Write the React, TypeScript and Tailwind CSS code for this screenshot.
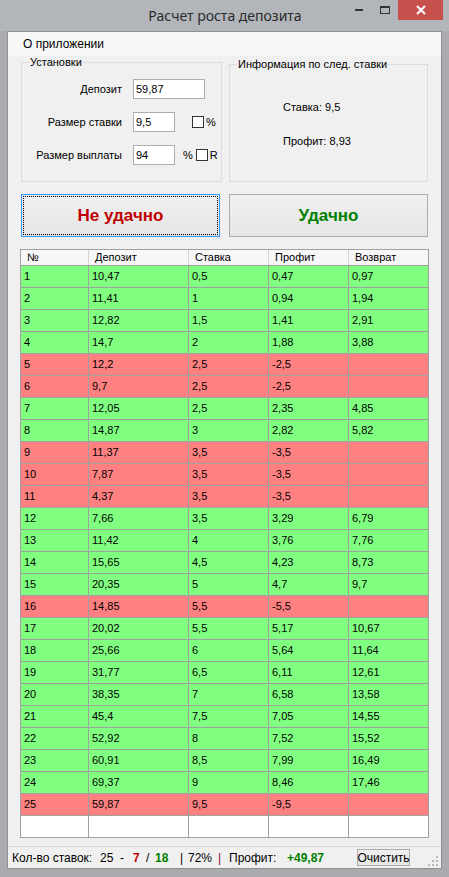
import React from 'react';

type Row = [number, string, string, string, string, boolean];

const rows: Row[] = [
  [1, '10,47', '0,5', '0,47', '0,97', true],
  [2, '11,41', '1', '0,94', '1,94', true],
  [3, '12,82', '1,5', '1,41', '2,91', true],
  [4, '14,7', '2', '1,88', '3,88', true],
  [5, '12,2', '2,5', '-2,5', '', false],
  [6, '9,7', '2,5', '-2,5', '', false],
  [7, '12,05', '2,5', '2,35', '4,85', true],
  [8, '14,87', '3', '2,82', '5,82', true],
  [9, '11,37', '3,5', '-3,5', '', false],
  [10, '7,87', '3,5', '-3,5', '', false],
  [11, '4,37', '3,5', '-3,5', '', false],
  [12, '7,66', '3,5', '3,29', '6,79', true],
  [13, '11,42', '4', '3,76', '7,76', true],
  [14, '15,65', '4,5', '4,23', '8,73', true],
  [15, '20,35', '5', '4,7', '9,7', true],
  [16, '14,85', '5,5', '-5,5', '', false],
  [17, '20,02', '5,5', '5,17', '10,67', true],
  [18, '25,66', '6', '5,64', '11,64', true],
  [19, '31,77', '6,5', '6,11', '12,61', true],
  [20, '38,35', '7', '6,58', '13,58', true],
  [21, '45,4', '7,5', '7,05', '14,55', true],
  [22, '52,92', '8', '7,52', '15,52', true],
  [23, '60,91', '8,5', '7,99', '16,49', true],
  [24, '69,37', '9', '8,46', '17,46', true],
  [25, '59,87', '9,5', '-9,5', '', false],
];

const colWidths = ['w-[68px]', 'w-[100px]', 'w-[80px]', 'w-[80px]', 'w-[80px]'];
const headers = ['№', 'Депозит', 'Ставка', 'Профит', 'Возврат'];

function CheckBox() {
  return <span className="inline-block w-[12px] h-[12px] border border-[#333333] bg-white" />;
}

function TextBox({ value, width }: { value: string; width: string }) {
  return (
    <div className={`${width} h-[20px] border border-[#abadb3] bg-white pl-[2px] flex items-center text-[11px] leading-none`}>
      {value}
    </div>
  );
}

function Grip() {
  return (
    <svg width="12" height="12" viewBox="0 0 12 12">
      {[
        [9, 1],
        [5, 5],
        [9, 5],
        [1, 9],
        [5, 9],
        [9, 9],
      ].map(([x, y], i) => (
        <rect key={i} x={x} y={y} width="2" height="2" fill="#b8b8b8" />
      ))}
    </svg>
  );
}

export default function App() {
  return (
    <div
      className="w-[449px] h-[877px] bg-[#a9abae] flex flex-col text-black"
      style={{ fontFamily: '"Liberation Sans", Arial, sans-serif' }}
    >
      {/* title bar */}
      <div className="h-[31px] flex items-start bg-[#b2b5b9]">
        <div className="flex-1 h-[30px] flex items-center justify-center pl-[105px]">
          <span className="text-[14px] text-[#2b2b2b]" style={{ fontFamily: '"Noto Sans", "Open Sans", sans-serif' }}>
            Расчет роста депозита
          </span>
        </div>
        <div className="flex items-start">
          <div className="w-[27px] h-[20px] flex items-center justify-center">
            <span className="block w-[8px] h-[2px] bg-[#333]" />
          </div>
          <div className="w-[26px] h-[20px] flex items-center justify-center">
            <span className="block w-[10px] h-[8px] border border-[#333] border-t-2" />
          </div>
          <div className="w-[45px] h-[20px] bg-[#c7504c] flex items-center justify-center mr-[6px]">
            <svg width="10" height="10" viewBox="0 0 10 10">
              <path d="M1 1 L9 9 M9 1 L1 9" stroke="white" strokeWidth="2" />
            </svg>
          </div>
        </div>
      </div>

      {/* client area */}
      <div className="ml-[7px] w-[435px] h-[838px] border border-[#8e9094] bg-[#f0f0f0] flex flex-col">
        {/* menu */}
        <div className="h-[24px] bg-[#f8f8f8] flex items-center pl-[15px] text-[12px]">О приложении</div>

        <div className="flex pl-[13px] text-[11px]">
          <fieldset className="w-[201px] h-[126px] border border-[#dcdcdc] px-0 m-0">
            <legend className="ml-[7px] px-[1px] leading-[13px]">Установки</legend>
            <div className="flex flex-col gap-[13px] pt-[10px]">
              <div className="flex items-center">
                <span className="w-[101px] text-right pr-[1px]">Депозит</span>
                <div className="ml-[10px]">
                  <TextBox value="59,87" width="w-[72px]" />
                </div>
              </div>
              <div className="flex items-center">
                <span className="w-[101px] text-right pr-[1px]">Размер ставки</span>
                <div className="ml-[10px]">
                  <TextBox value="9,5" width="w-[42px]" />
                </div>
                <span className="ml-[17px] flex items-center">
                  <CheckBox />
                </span>
                <span className="ml-[2px]">%</span>
              </div>
              <div className="flex items-center">
                <span className="w-[101px] text-right pr-[1px]">Размер выплаты</span>
                <div className="ml-[10px]">
                  <TextBox value="94" width="w-[42px]" />
                </div>
                <span className="ml-[8px]">%</span>
                <span className="ml-[3px] flex items-center">
                  <CheckBox />
                </span>
                <span className="ml-[2px]">R</span>
              </div>
            </div>
          </fieldset>

          <fieldset className="ml-[7px] mt-[2px] w-[199px] h-[124px] border border-[#dcdcdc] px-0 m-0">
            <legend className="ml-[7px] px-[1px] leading-[13px]">Информация по след. ставки</legend>
            <div className="pl-[53px] pt-[30px] flex flex-col gap-[21px] leading-[13px]">
              <span>Ставка: 9,5</span>
              <span>Профит: 8,93</span>
            </div>
          </fieldset>
        </div>

        {/* buttons */}
        <div className="flex pl-[13px] mt-[12px] gap-[9px]">
          <div className="w-[199px] h-[43px] border border-[#3399ff] bg-gradient-to-b from-[#f0f0f0] to-[#e5e5e5] p-[1px]">
            <div className="w-full h-full border border-dotted border-black flex items-center justify-center">
              <span className="text-[17px] font-bold text-[#c00000]">Не удачно</span>
            </div>
          </div>
          <div className="w-[199px] h-[43px] border border-[#acacac] bg-gradient-to-b from-[#f0f0f0] to-[#e5e5e5] flex items-center justify-center">
            <span className="text-[17px] font-bold text-[#008000]">Удачно</span>
          </div>
        </div>

        {/* grid */}
        <div className="ml-[12px] mt-[12px] w-[409px] border-l border-t border-[#a0a0a0] text-[11px]">
          <div className="flex h-[16px] bg-[#f7f7f7] border-b border-[#a0a0a0]">
            {headers.map((h, i) => (
              <div
                key={h}
                className={`${colWidths[i]} h-full pl-[6px] flex items-center border-r ${i === 4 ? 'border-[#a0a0a0]' : 'border-[#d5d5d5]'}`}
              >
                {h}
              </div>
            ))}
          </div>
          {rows.map((r) => (
            <div key={r[0]} className={`flex h-[22px] ${r[5] ? 'bg-[#80ff80]' : 'bg-[#ff8080]'}`}>
              {[String(r[0]), r[1], r[2], r[3], r[4]].map((v, i) => (
                <div key={i} className={`${colWidths[i]} h-full pl-[3px] flex items-center border-r border-b border-[#a0a0a0]`}>
                  {v}
                </div>
              ))}
            </div>
          ))}
          <div className="flex h-[22px] bg-white">
            {colWidths.map((w, i) => (
              <div key={i} className={`${w} h-full border-r border-b border-[#a0a0a0]`} />
            ))}
          </div>
        </div>

        {/* status bar */}
        <div className="mt-auto h-[22px] border-t border-[#d7d7d7] flex items-center pl-[4px] text-[12px] leading-none">
          <span className="w-[88px]">Кол-во ставок:</span>
          <span className="w-[20px]">25</span>
          <span className="w-[13px]">-</span>
          <span className="w-[13px] font-bold text-[#c00000]">7</span>
          <span className="w-[9px]">/</span>
          <span className="w-[25px] font-bold text-[#008000]">18</span>
          <span className="w-[8px]">|</span>
          <span className="w-[30px]">72%</span>
          <span className="w-[11px] text-[#800040]">|</span>
          <span className="w-[58px]">Профит:</span>
          <span className="w-[70px] font-bold text-[#008000]">+49,87</span>
          <div className="w-[53px] h-[17px] border border-[#acacac] bg-gradient-to-b from-[#f0f0f0] to-[#e5e5e5] flex items-center justify-center text-[12px]">
            Очистить
          </div>
          <div className="ml-auto mr-[2px] self-end mb-[1px]">
            <Grip />
          </div>
        </div>
      </div>
    </div>
  );
}
